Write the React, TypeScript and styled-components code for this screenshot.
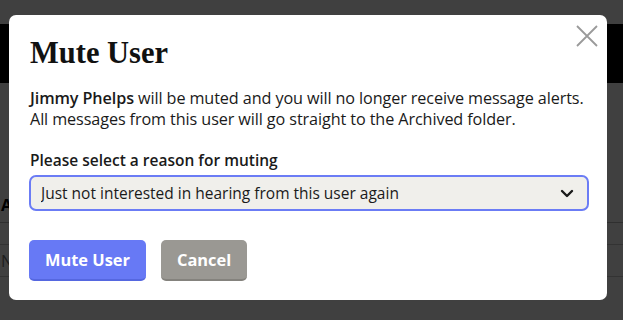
import { useState, ChangeEvent } from 'react'
import styled, { createGlobalStyle } from 'styled-components'

const reasons = [
  'Just not interested in hearing from this user again',
  'This user is sending spam',
  'This user is being rude or abusive',
  'Other'
]

function App() {
  const [reason, setReason] = useState(reasons[0])

  const handleReason = (event: ChangeEvent<HTMLSelectElement>) => {
    setReason(event.target.value)
  }

  return (
    <>
      <GlobalStyle />
      <Page>
        <TopStrip />
        <Banner />
        <PageBody>
          <PageRow>Archived</PageRow>
          <PageInput>Note</PageInput>
        </PageBody>
      </Page>
      <Overlay>
        <Dialog role="dialog" aria-labelledby="mute-title">
          <CloseButton aria-label="Close">
            <svg width="22" height="22" viewBox="0 0 22 22">
              <path d="M1 1 L21 21 M21 1 L1 21" stroke="#9a9a9a" strokeWidth="1.8" fill="none" />
            </svg>
          </CloseButton>
          <Title id="mute-title">Mute User</Title>
          <Description>
            <Name>Jimmy Phelps</Name> will be muted and you will no longer receive message alerts.
            <br />
            All messages from this user will go straight to the Archived folder.
          </Description>
          <Label htmlFor="mute-reason">Please select a reason for muting</Label>
          <SelectWrap>
            <Select id="mute-reason" value={reason} onChange={handleReason}>
              {reasons.map((r) => <option key={r} value={r}>{r}</option>)}
            </Select>
            <Chevron width="14" height="9" viewBox="0 0 14 9">
              <path d="M2 2 L7 7 L12 2" stroke="#1a1a1a" strokeWidth="2.4" fill="none" strokeLinecap="round" strokeLinejoin="round" />
            </Chevron>
          </SelectWrap>
          <Actions>
            <Button $variant="primary">Mute User</Button>
            <Button $variant="secondary">Cancel</Button>
          </Actions>
        </Dialog>
      </Overlay>
    </>
  )
}

const GlobalStyle = createGlobalStyle`
  html, body {
    margin: 0;
    padding: 0;
    height: 100%;
    background: #ffffff;
    font-family: "Open Sans", "Liberation Sans", sans-serif;
  }
`

const Page = styled.div`
  display: flex;
  flex-direction: column;
  height: 320px;
  background: #ffffff;
`

const TopStrip = styled.div`
  height: 24px;
  background: #ffffff;
`

const Banner = styled.div`
  height: 59px;
  background: #000000;
`

const PageBody = styled.div`
  display: flex;
  flex-direction: column;
  padding-top: 104px;
`

const PageRow = styled.div`
  height: 35px;
  display: flex;
  align-items: center;
  padding-left: 1px;
  font-size: 16px;
  font-weight: 700;
  color: #000;
  border-bottom: 1px solid #bbb;
`

const PageInput = styled.div`
  height: 31px;
  margin-top: 21px;
  display: flex;
  align-items: center;
  padding-left: 1px;
  font-size: 16px;
  color: #777;
  border-top: 1px solid #ccc;
  border-bottom: 1px solid #ccc;
`

const Overlay = styled.div`
  position: fixed;
  inset: 0;
  background: rgba(0, 0, 0, 0.75);
  display: flex;
  align-items: flex-start;
  padding: 15px 16px 0 9px;
`

const Dialog = styled.div`
  position: relative;
  width: 598px;
  box-sizing: border-box;
  background: #ffffff;
  border-radius: 7px;
  padding: 20px 20px 19px 20px;
  display: flex;
  flex-direction: column;
`

const CloseButton = styled.button`
  position: absolute;
  top: 10px;
  right: 9px;
  border: 0;
  padding: 0;
  background: none;
  cursor: pointer;
  line-height: 0;
`

const Title = styled.h2`
  margin: 0 0 17px 1px;
  font-family: "Liberation Serif", "DejaVu Serif", serif;
  font-weight: 700;
  font-size: 30.5px;
  line-height: 36px;
  color: #111111;
`

const Description = styled.p`
  margin: 0 0 20px 1px;
  font-size: 16.2px;
  line-height: 21px;
  color: #1a1a1a;
  letter-spacing: -0.1px;
`

const Name = styled.span`
  font-weight: 600;
`

const Label = styled.label`
  margin: 0 0 4px 1px;
  font-size: 15.5px;
  line-height: 21px;
  font-weight: 600;
  color: #1a1a1a;
`

const SelectWrap = styled.div`
  position: relative;
  width: 560px;
`

const Select = styled.select`
  appearance: none;
  width: 100%;
  height: 36px;
  box-sizing: border-box;
  border: 2px solid #6b7cf5;
  border-radius: 7px;
  background: #f0efeb;
  padding: 0 40px 0 10px;
  font-family: "Open Sans", "Liberation Sans", sans-serif;
  font-size: 15.5px;
  color: #1a1a1a;
  outline: none;
`

const Chevron = styled.svg`
  position: absolute;
  right: 15px;
  top: 14px;
  pointer-events: none;
`

const Actions = styled.div`
  display: flex;
  gap: 15px;
  margin-top: 29px;
`

const Button = styled.button<{ $variant: 'primary' | 'secondary' }>`
  height: 41px;
  box-sizing: border-box;
  padding: 0 16px;
  border: 0;
  border-radius: 5px;
  font-family: "Open Sans", "Liberation Sans", sans-serif;
  font-weight: 700;
  font-size: 16.4px;
  color: #ffffff;
  cursor: pointer;
  background: ${(p) => (p.$variant === 'primary' ? '#6779f5' : '#9a9893')};
  border-bottom: 2px solid ${(p) => (p.$variant === 'primary' ? '#5567e0' : '#84827d')};
`

export default App
